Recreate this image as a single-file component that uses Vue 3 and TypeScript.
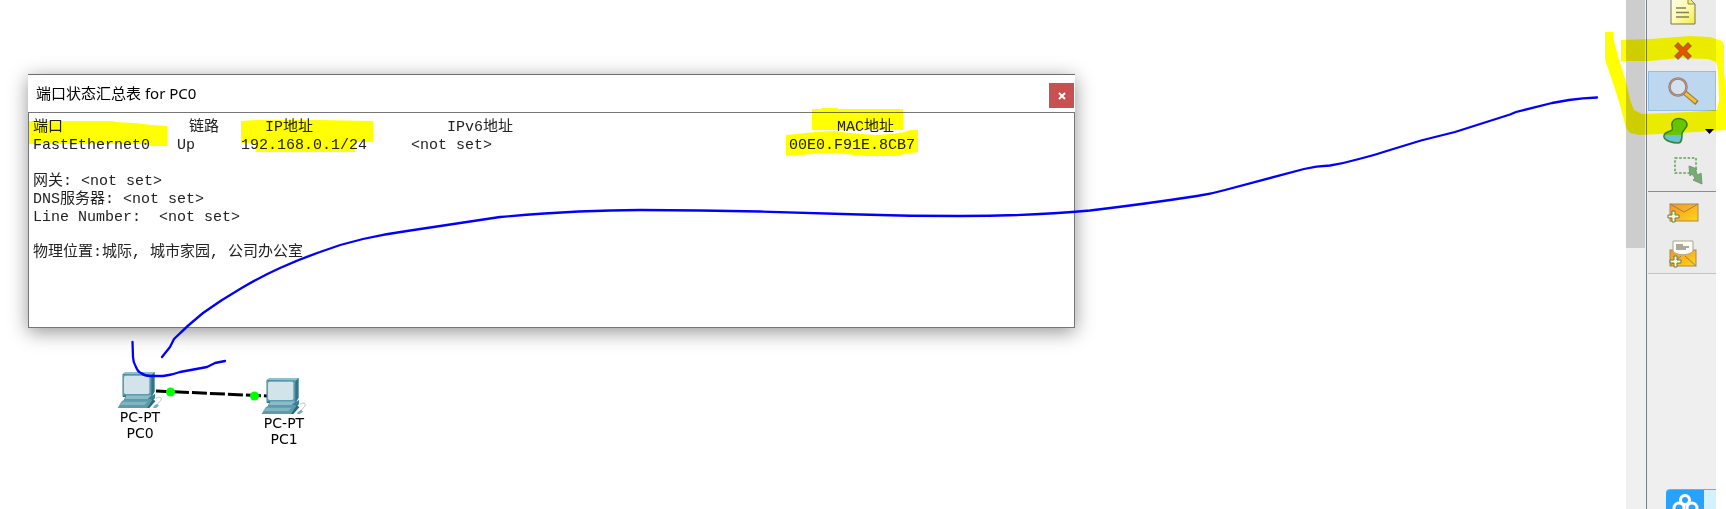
<script setup lang="ts">
interface PortRow { port: string; link: string; ip: string; ipv6: string; mac: string }
interface Device { id: string; model: string; name: string }

const ports: PortRow[] = [
  { port: 'FastEthernet0', link: 'Up', ip: '192.168.0.1/24', ipv6: '<not set>', mac: '00E0.F91E.8CB7' },
]

const details: string[] = [
  '网关: <not set>',
  'DNS服务器: <not set>',
  'Line Number:  <not set>',
]

const devices: Device[] = [
  { id: 'pc0', model: 'PC-PT', name: 'PC0' },
  { id: 'pc1', model: 'PC-PT', name: 'PC1' },
]
</script>

<template>
  <div class="app">
    <main class="workspace">
      <svg class="layer" aria-hidden="true">
        <path d="M156 391L267 396" stroke="#000" stroke-width="3" stroke-dasharray="15 3" />
        <circle cx="170.5" cy="392" r="4.5" fill="#0f0" />
        <circle cx="254.5" cy="396" r="4.5" fill="#0f0" />
      </svg>

      <div v-for="d in devices" :key="d.id" class="device" :class="d.id">
        <svg width="46" height="38" viewBox="0 0 138 114" aria-hidden="true">
          <path d="M17 9L26 3H113V62L103 78H17Z" fill="#2f7587" />
          <path d="M17 9L26 3H113L104 11Z" fill="#8fc0cc" />
          <path d="M17 10H103V73H17Z" fill="#5b9cae" />
          <rect x="21" y="14" width="76" height="55" rx="5" fill="#d3e3ea" />
          <path d="M26 73H108L114 68V82L104 90H20Z" fill="#3a7f92" />
          <path d="M28 73H104L92 84H24Z" fill="#8dbac7" />
          <path d="M14 91L26 84H101L108 91L96 111H2Z" fill="#5a9bad" />
          <path d="M16 92H92L82 102H8Z" fill="#82b3c1" />
          <path d="M108 84L115 91L97 111H90Z" fill="#28697b" />
          <path d="M117 82C124 76 136 77 132 87C129 94 119 95 122 103" fill="none" stroke="#a9c9d1" stroke-width="3" />
          <path d="M110 105L120 99L126 104L117 111H109Z" fill="#79aab7" />
        </svg>
        <span>{{ d.model }}</span>
        <span>{{ d.name }}</span>
      </div>

      <section class="dialog" role="dialog" aria-labelledby="dialog-title">
        <header class="titlebar">
          <h1 id="dialog-title">端口状态汇总表 for PC0</h1>
          <button type="button" class="close" aria-label="关闭">
            <svg width="8" height="8" viewBox="0 0 8 8"><path d="M1 1L7 7M7 1L1 7" stroke="#fff" stroke-width="2" /></svg>
          </button>
        </header>
        <div class="content">
          <table>
            <colgroup><col class="c-port"><col class="c-link"><col class="c-ip"><col class="c-ipv6"><col></colgroup>
            <thead>
              <tr>
                <th>端口</th>
                <th class="h-link">链路</th>
                <th class="h-ip">IP地址</th>
                <th class="h-ipv6">IPv6地址</th>
                <th class="h-mac">MAC地址</th>
              </tr>
            </thead>
            <tbody>
              <tr v-for="p in ports" :key="p.port">
                <td>{{ p.port }}</td>
                <td>{{ p.link }}</td>
                <td>{{ p.ip }}</td>
                <td>{{ p.ipv6 }}</td>
                <td>{{ p.mac }}</td>
              </tr>
            </tbody>
          </table>
          <div class="details">
            <p v-for="line in details" :key="line">{{ line }}</p>
          </div>
          <p>物理位置:城际, 城市家园, 公司办公室</p>
        </div>
      </section>
    </main>

    <div class="scrollbar"><div class="thumb"></div></div>

    <aside class="tools">
      <button type="button" class="tool first" aria-label="便签">
        <svg width="26" height="28" viewBox="0 0 26 28">
          <defs><linearGradient id="note" x1="0" y1="0" x2="1" y2="1"><stop offset="0" stop-color="#fffff0" /><stop offset=".5" stop-color="#fffbb0" /><stop offset="1" stop-color="#f3ee3c" /></linearGradient></defs>
          <path d="M1 0H18L25 7V27H1Z" fill="url(#note)" stroke="#77745a" />
          <path d="M18 0V7H25Z" fill="#f3ec6e" stroke="#8c8860" />
          <path d="M6 11H16M6 15.500H19M6 20H19" stroke="#85805c" stroke-width="1.300" />
        </svg>
      </button>
      <button type="button" class="tool" aria-label="删除">
        <svg width="20" height="20" viewBox="0 0 20 20"><path d="M5 2L10 7L15 2L18 5L13 10L18 15L15 18L10 13L5 18L2 15L7 10L2 5Z" fill="#f04e16" stroke="#a56a4a" stroke-width="1.300" /></svg>
      </button>
      <button type="button" class="tool selected" aria-label="查看">
        <svg width="34" height="32" viewBox="0 0 34 32">
          <path d="M18 17L31 28" stroke="#8c7950" stroke-width="5" />
          <path d="M19 18L30 27" stroke="#f7c02d" stroke-width="3" />
          <circle cx="12" cy="12" r="8.500" fill="#d3e2ee" stroke="#8d7c74" stroke-width="2.500" />
          <circle cx="12" cy="12" r="8.500" fill="none" stroke="#c69a80" stroke-width="1" />
        </svg>
      </button>
      <button type="button" class="tool shape" aria-label="绘图">
        <svg width="26" height="28" viewBox="0 0 26 28">
          <clipPath id="low"><rect y="18" width="26" height="10" /></clipPath>
          <path d="M11 3C15 0 24 2 24 8C24 12 19 13 19 17C19 21 19 26 15 26C10 26 2 24 1 20C0 15 7 15 9 13C11 11 6 7 11 3Z" fill="#67c413" />
          <path d="M11 3C15 0 24 2 24 8C24 12 19 13 19 17C19 21 19 26 15 26C10 26 2 24 1 20C0 15 7 15 9 13C11 11 6 7 11 3Z" fill="#68c3d1" clip-path="url(#low)" />
          <path d="M11 3C15 0 24 2 24 8C24 12 19 13 19 17C19 21 19 26 15 26C10 26 2 24 1 20C0 15 7 15 9 13C11 11 6 7 11 3Z" fill="none" stroke="#397f35" stroke-width="1.500" />
        </svg>
        <svg width="9" height="5" viewBox="0 0 9 5"><path d="M0 0H9L4.500 5Z" fill="#000" /></svg>
      </button>
      <button type="button" class="tool resize" aria-label="调整大小">
        <svg width="30" height="30" viewBox="0 0 30 30">
          <rect x="2" y="2" width="21" height="15" fill="none" stroke="#5da352" stroke-width="1.500" stroke-dasharray="2.500 1.700" />
          <path d="M16 10L24 13L22 15L25 19L28 17L29 28L20 24L22 22L19 18L17 20Z" fill="#74ae70" stroke="#829083" />
        </svg>
      </button>
      <hr>
      <button type="button" class="tool" aria-label="添加简单PDU">
        <svg width="34" height="22" viewBox="0 0 34 22">
          <defs><linearGradient id="env" x1="0" y1="0" x2="1" y2="1"><stop offset="0" stop-color="#f4942b" /><stop offset=".5" stop-color="#fcb51c" /><stop offset="1" stop-color="#ffd518" /></linearGradient></defs>
          <rect x="4" y="2" width="28" height="17" fill="url(#env)" stroke="#a58a55" />
          <path d="M4 2L18 10L32 2" fill="none" stroke="#94815c" />
          <path d="M6 9H9V13H13V16H9V20H6V16H2V13H6Z" fill="#f5ffd0" stroke="#707448" />
        </svg>
      </button>
      <button type="button" class="tool" aria-label="添加复杂PDU">
        <svg width="30" height="30" viewBox="0 0 30 30">
          <rect x="2" y="12" width="26" height="16" fill="url(#env)" stroke="#a58a55" />
          <path d="M2 28L13 18M28 28L17 18" stroke="#94815c" />
          <path d="M5 3H25V13C22 18 8 18 5 13Z" fill="#fffef2" stroke="#aaa58f" />
          <path d="M8 6H15V8H21V10H18V12H8Z" fill="#aaa99b" />
          <path d="M6 18H9V22H13V25H9V29H6V25H2V22H6Z" fill="#f5ffd0" stroke="#707448" />
        </svg>
      </button>
      <div class="rest">
        <button type="button" class="cloud" aria-label="云服务">
          <svg width="38" height="19" viewBox="0 0 38 19" fill="none" stroke="#fff" stroke-width="3">
            <circle cx="19" cy="10" r="4.500" /><circle cx="13" cy="18" r="5" /><circle cx="26" cy="18" r="5" />
          </svg>
        </button>
      </div>
    </aside>

    <svg class="layer marker" aria-hidden="true" fill="#ff0">
      <path d="M29 121H113L115 122L135 123L152 125L167 126V146H150L148 144H29Z" />
      <path d="M241 121L256 120H320L373 121V142H355V152H256V143H241Z" />
      <path d="M812 109H821V108H838V109H903V130H812Z" />
      <path d="M786 135L797 134L815 132L835 131L850 133L875 135L890 134L905 132L910 130H918V152L905 154L895 156H865L845 154L825 153L800 155L786 156Z" />
      <path d="M1605 32H1613L1614 41L1618 56L1626 82L1630 100L1634 110L1642 114L1690 112L1717 110L1719 100L1718 70L1716 62L1708 59L1680 58L1650 61H1621V40L1650 39L1690 36L1710 37L1722 41L1724 45V70L1726 95V130L1680 133L1640 135L1630 133L1626 128L1620 105L1612 80L1605 60Z" />
    </svg>
    <svg class="layer" aria-hidden="true" fill="none" stroke="#00f" stroke-width="2.300" stroke-linecap="round" stroke-linejoin="round">
      <path d="M162 357L170 347L174 339Q188 325 203 313Q221 300 240 289Q260 277 280 268Q300 259 320 252Q341 244 363 239Q385 234 407 231L500 217Q580 210 640 210Q700 210 760 211.500L860 214.500Q910 216 960 216Q1030 216 1090 210.500Q1145 204 1197 196Q1211 194 1225 190L1304 169Q1316 166 1330 165.500Q1345 163 1359 159Q1375 155 1390 150L1421 140.500L1455 132L1510 114.500L1516 112L1552 103L1569 100Q1583 98 1597 97.500" />
      <path d="M132.500 342L133 357Q133 362 136 367Q138 372 141 373Q145 376 150 376H163Q172 375 180 372L207 367L215 363L225 361" />
    </svg>
  </div>
</template>

<style>
body { margin: 0; background: #fff; }
</style>

<style scoped>
.app {
  position: relative;
  display: flex;
  height: 100vh;
  overflow: hidden;
  padding-right: 10px;
  box-sizing: border-box;
  background: #fff;
  color: #000;
}
.workspace { position: relative; flex: 1; min-width: 0; overflow: hidden; }
.layer { position: absolute; inset: 0; width: 100%; height: 100%; pointer-events: none; }
.marker { mix-blend-mode: multiply; }

.device {
  position: absolute;
  display: flex;
  flex-direction: column;
  align-items: center;
  font: 14px/16px "DejaVu Sans", Verdana, sans-serif;
}
.pc0 { left: 117px; top: 371px; }
.pc1 { left: 261px; top: 377px; }

.dialog {
  position: absolute;
  left: 28px;
  top: 74px;
  width: min(1047px, 100% - 56px);
  box-sizing: border-box;
  border-top: 1px solid #6e6e6e;
  background: #fff;
  box-shadow: 0 4px 18px rgba(0, 0, 0, .42);
}
.titlebar { display: flex; align-items: flex-start; justify-content: space-between; height: 37px; padding: 0 1px 0 8px; }
.titlebar h1 { margin: 8px 0 0; font: 15px/20px "Noto Sans", "Noto Sans CJK SC", sans-serif; }
.close {
  display: grid;
  place-items: center;
  width: 25px;
  height: 25px;
  margin-top: 8px;
  padding: 0;
  border: 0;
  background: #c75050;
}
.content {
  min-height: 216px;
  box-sizing: border-box;
  padding: 6px 4px;
  border: 1px solid #777;
  color: #222;
  font: 15px/18px "Liberation Mono", "Noto Sans CJK SC", monospace;
  white-space: pre;
}
table { width: 100%; table-layout: fixed; border-collapse: collapse; }
th, td { height: 18px; padding: 0; font-weight: 400; text-align: left; }
.c-port { width: 144px; }
.c-link { width: 64px; }
.c-ip { width: 170px; }
.c-ipv6 { width: 378px; }
.h-link { padding-left: 12px; }
.h-ip { padding-left: 24px; }
.h-ipv6 { padding-left: 36px; }
.h-mac { padding-left: 48px; }
.content p { margin: 0; }
.details { margin: 18px 0 17px; }

.scrollbar { width: 20px; background: #f0f0f0; }
.thumb { height: 248px; width: 19px; background: #cdcdcd; }

.tools {
  display: flex;
  flex-direction: column;
  width: 70px;
  box-sizing: border-box;
  padding-left: 1px;
  border-left: 1px solid #7c808a;
  background: #ebebeb;
}
.tool {
  display: flex;
  flex: none;
  align-items: center;
  justify-content: center;
  height: 40px;
  padding: 0 0 0 2px;
  border: 0;
  background: none;
}
.first { height: 31px; align-items: flex-start; }
.first svg { margin-top: -3px; }
.selected { box-sizing: border-box; border: 1px solid #90c0ea; background: #bdd7ee; }
.shape { justify-content: flex-end; gap: 16px; padding-right: 2px; }
.resize { padding-left: 12px; }
.tools hr { width: 100%; height: 1px; margin: 0 0 1px; border: 0; background: #888c94; }
.rest { display: flex; flex: 1; align-items: flex-end; justify-content: flex-end; border-top: 1px solid #c4c4c4; background: #efefef; }
.cloud {
  width: 50px;
  height: 20px;
  padding: 0;
  overflow: hidden;
  border: 0;
  border-top: 1px solid #5bb4f5;
  border-radius: 4px 0 0 0;
  background: linear-gradient(90deg, #27a2ff 38px, #d4f1ff 38px);
  text-align: left;
}
.cloud svg { display: block; }
</style>
